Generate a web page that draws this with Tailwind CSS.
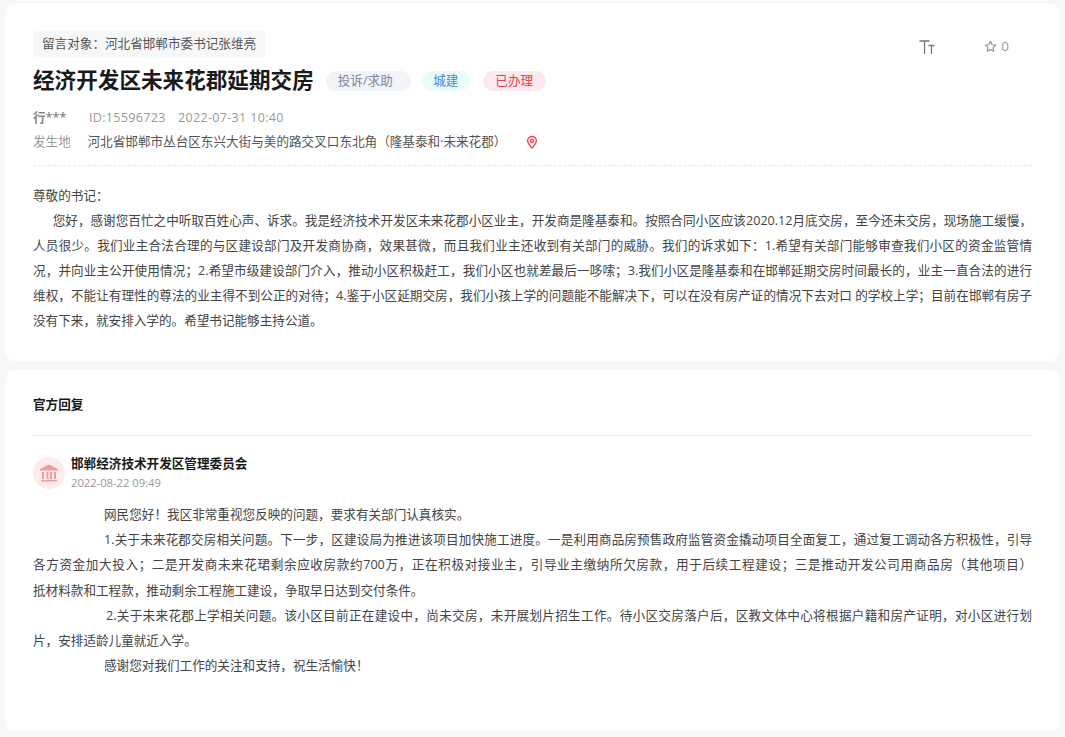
<!DOCTYPE html>
<html lang="zh">
<head>
<meta charset="utf-8">
<title>留言详情</title>
<script src="https://cdn.jsdelivr.net/npm/@tailwindcss/browser@4"></script>
</head>
<body class="h-[737px] overflow-hidden bg-[#f6f7f9] font-['Open_Sans','Noto_Sans_CJK_SC',sans-serif] text-[12.6px] text-[#333]">
<div class="px-[6px] pt-[4px] space-y-[9px]">

    <!-- 留言内容 -->
    <div class="h-[357px] rounded-lg bg-white px-[27px] pt-[27px]">
        <div class="flex justify-between">
            <div class="h-[26px] rounded-sm bg-[#f6f7f9] px-[9px] leading-[26px] text-[#555]">留言对象：河北省邯郸市委书记张维亮</div>
            <div class="flex items-center text-[#999] h-[27px] mt-[2px]">
                <svg class="w-[16px] h-[14px] mr-[49px]" viewBox="0 0 16 14" fill="none" stroke="#777" stroke-width="1.300"><path d="M0.500 1h10M5.500 1v13M9.500 5.500h6M12.500 5.500V14"/></svg>
                <svg class="w-[13px] h-[13px] mr-[4px]" viewBox="0 0 24 24" fill="none" stroke="#8f8f8f" stroke-width="2" stroke-linejoin="round"><path d="M12 2.500l2.900 6.200 6.700.8-5 4.600 1.400 6.700-6-3.400-6 3.400 1.400-6.700-5-4.600 6.700-.8z"/></svg>
                <span class="mr-[23px] text-[13.500px]">0</span>
            </div>
        </div>
        <div class="flex items-center mt-[4px] h-[32px]">
            <h1 class="text-[21.600px] font-bold text-[#1a1a1a]">经济开发区未来花郡延期交房</h1>
            <span class="ml-[12px] w-[85px] h-[20px] rounded-full bg-[#f1f4f9] pl-[12px] leading-[20px] text-[#7f8796] mt-[1px]">投诉/求助</span>
            <span class="ml-[11px] w-[48px] h-[20px] rounded-full bg-[#ebfbf9] text-center leading-[20px] text-[#4a86d8] mt-[1px]">城建</span>
            <span class="ml-[13px] w-[63px] h-[20px] rounded-full bg-[#fde9ec] text-center leading-[20px] text-[#e23a52] mt-[1px]">已办理</span>
        </div>
        <div class="flex items-center mt-[12px] h-[20px] text-[#999] tracking-[0.300px]">
            <span class="w-[56px] font-semibold text-[#888] tracking-normal">行***</span>
            <span class="mr-[12px]">ID:15596723</span>
            <span>2022-07-31 10:40</span>
        </div>
        <div class="flex items-center mt-[4px] h-[20px]">
            <span class="w-[54.500px] text-[#999]">发生地</span>
            <span class="text-[#555]">河北省邯郸市丛台区东兴大街与美的路交叉口东北角（隆基泰和·未来花郡）</span>
            <svg class="ml-[18.500px] w-[14px] h-[14px]" viewBox="0 0 24 24" fill="none" stroke="#f0444f" stroke-width="2.400"><path d="M12 22.500c-4.500-5-7.500-8.600-7.500-12.500a7.500 7.500 0 0 1 15 0c0 3.900-3 7.500-7.500 12.500z"/><circle cx="12" cy="10" r="2.800"/></svg>
        </div>
        <div class="mt-[13px] border-t border-dashed border-[#e5e7eb]"></div>
        <div class="mt-[17px] text-justify leading-[25px] text-[#444]">
            <p>尊敬的书记：</p>
            <p>&nbsp;&nbsp;&nbsp;&nbsp;&nbsp;&nbsp;您好，感谢您百忙之中听取百姓心声、诉求。我是经济技术开发区未来花郡小区业主，开发商是隆基泰和。按照合同小区应该2020.12月底交房，至今还未交房，现场施工缓慢，人员很少。我们业主合法合理的与区建设部门及开发商协商，效果甚微，而且我们业主还收到有关部门的威胁。我们的诉求如下：1.希望有关部门能够审查我们小区的资金监管情况，并向业主公开使用情况；2.希望市级建设部门介入，推动小区积极赶工，我们小区也就差最后一哆嗦；3.我们小区是隆基泰和在邯郸延期交房时间最长的，业主一直合法的进行维权，不能让有理性的尊法的业主得不到公正的对待；4.鉴于小区延期交房，我们小孩上学的问题能不能解决下，可以在没有房产证的情况下去对口 的学校上学；目前在邯郸有房子没有下来，就安排入学的。希望书记能够主持公道。</p>
        </div>
    </div>

    <!-- 官方回复 -->
    <div class="h-[361px] rounded-lg bg-white px-[27px]">
        <div class="h-[66px] border-b border-[#e5e7eb] pt-[25px] font-bold leading-[20px] text-[#1a1a1a]">官方回复</div>
        <div class="flex mt-[20px]">
            <div class="flex h-[32px] w-[32px] items-center justify-center rounded-full bg-[#fdeced] mt-[1px]">
                <svg class="w-[20px] h-[20px]" viewBox="0 0 20 20" fill="#ee9c9c"><path d="M10 1.500L19 6v1.500H1V6zM3 9h2v7H3zM7.500 9h2v7h-2zM11 9h2v7h-2zM15 9h2v7h-2zM2 17h16v1.500H2z"/></svg>
            </div>
            <div class="ml-[6px]">
                <div class="font-semibold leading-[18px] text-[#1a1a1a] mt-[-1px]">邯郸经济技术开发区管理委员会</div>
                <div class="mt-[1px] text-[11.200px] leading-[18px] text-[#999]">2022-08-22 09:49</div>
            </div>
        </div>
        <div class="mt-[10px] text-justify leading-[25.200px] text-[#444]">
            <p class="indent-[71px]">网民您好！我区非常重视您反映的问题，要求有关部门认真核实。</p>
            <p class="indent-[71px]">1.关于未来花郡交房相关问题。下一步，区建设局为推进该项目加快施工进度。一是利用商品房预售政府监管资金撬动项目全面复工，通过复工调动各方积极性，引导各方资金加大投入；二是开发商未来花珺剩余应收房款约700万，正在积极对接业主，引导业主缴纳所欠房款，用于后续工程建设；三是推动开发公司用商品房（其他项目）<span class="whitespace-nowrap">抵材料款和工程款</span>，推动剩余工程施工建设，争取早日达到交付条件。</p>
            <p class="indent-[73px]">2.关于未来花郡上学相关问题。该小区目前正在建设中，尚未交房，未开展划片招生工作。待小区交房落户后，区教文体中心将根据户籍和房产证明，对小区进行划片，安排适龄儿童就近入学。</p>
            <p class="indent-[71px]">感谢您对我们工作的关注和支持，祝生活愉快！</p>
        </div>
    </div>

</div>
</body>
</html>
